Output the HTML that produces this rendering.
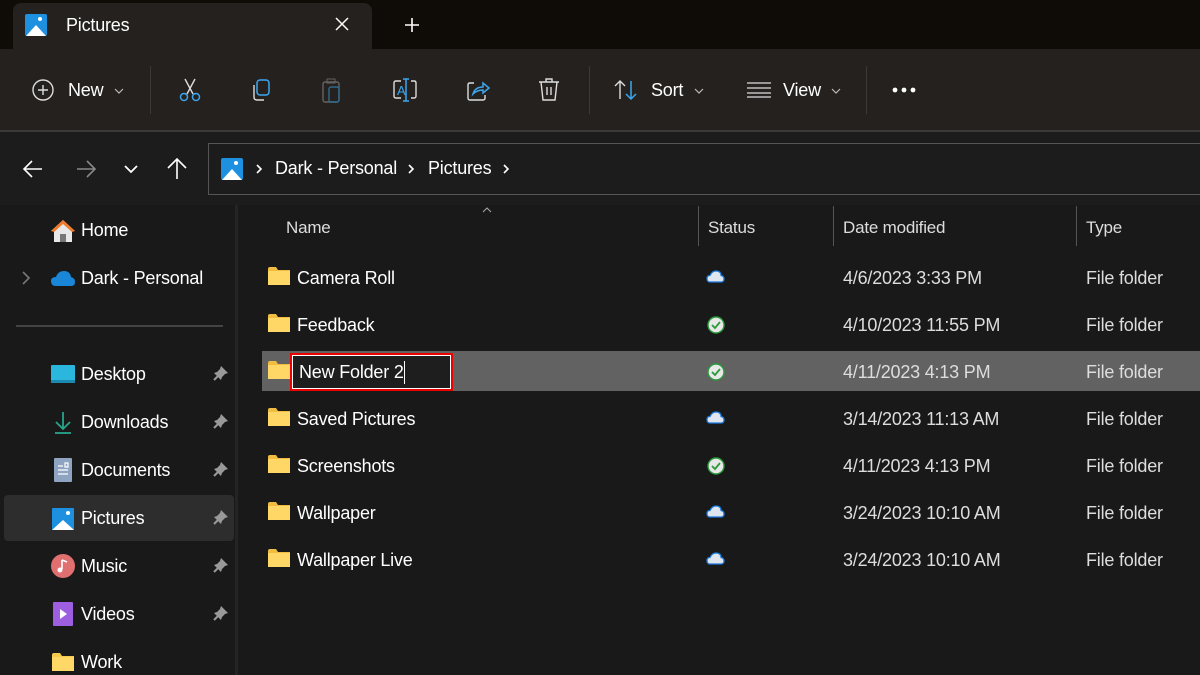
<!DOCTYPE html>
<html><head><meta charset="utf-8"><style>
*{margin:0;padding:0;box-sizing:border-box}
body{width:1200px;height:675px;overflow:hidden;background:#1c1c1c;font-family:"Segoe UI","Liberation Sans",sans-serif;color:#fff;position:relative}
.a{position:absolute}
.t{font-size:18px;white-space:nowrap;letter-spacing:-0.2px}
svg{position:absolute;overflow:visible}
</style></head><body>
<div class="a" style="left:0;top:0;width:1200px;height:49px;background:#0f0b06"></div>
<div class="a" style="left:13px;top:3px;width:359px;height:48px;background:#24211e;border-radius:8px 8px 0 0"></div>
<svg style="left:25px;top:14px" width="22" height="22"><rect width="22" height="22" rx="2" fill="#1e90e0"/><path d="M1 22 L11 11 L21 22Z" fill="#fff"/><circle cx="15" cy="5" r="2" fill="#fff"/></svg>
<div class="a t" style="left:66px;top:15px;font-size:18px">Pictures</div>
<svg style="left:335px;top:17px" width="14" height="14"><path d="M1 1L13 13M13 1L1 13" stroke="#fff" stroke-width="1.5"/></svg>
<svg style="left:404px;top:17px" width="16" height="16"><path d="M8 1V15M1 8H15" stroke="#fff" stroke-width="1.6"/></svg>
<div class="a" style="left:0;top:49px;width:1200px;height:81px;background:#24211e"></div>
<div class="a" style="left:0;top:130px;width:1200px;height:2px;background:#3a3a3a"></div>
<svg style="left:32px;top:79px" width="22" height="22"><circle cx="11" cy="11" r="10" fill="none" stroke="#ddd" stroke-width="1.4"/><path d="M11 6V16M6 11H16" stroke="#ddd" stroke-width="1.4"/></svg>
<div class="a t" style="left:68px;top:80px">New</div>
<svg style="left:114px;top:88px" width="10" height="6"><path d="M1 1L5 5L9 1" fill="none" stroke="#bbb" stroke-width="1.2"/></svg>
<div class="a" style="left:150px;top:66px;width:1px;height:48px;background:#3a3a3a"></div>
<svg style="left:178px;top:78px" width="24" height="24"><path d="M7 1L15 16M17 1L9 16" stroke="#ddd" stroke-width="1.4"/><circle cx="6" cy="19" r="3.5" fill="none" stroke="#3ba7f0" stroke-width="1.5"/><circle cx="18" cy="19" r="3.5" fill="none" stroke="#3ba7f0" stroke-width="1.5"/></svg>
<svg style="left:250px;top:79px" width="24" height="24"><rect x="7" y="1" width="12" height="15" rx="3" fill="none" stroke="#3ba7f0" stroke-width="1.5"/><path d="M4 6V18Q4 21 7 21H14" fill="none" stroke="#ddd" stroke-width="1.4"/></svg>
<svg style="left:322px;top:78px" width="24" height="26" opacity=".55"><rect x="1" y="4" width="16" height="20" rx="2" fill="none" stroke="#999" stroke-width="1.4"/><rect x="7" y="9" width="10" height="15" rx="2" fill="none" stroke="#3ba7f0" stroke-width="1.4"/><rect x="5" y="1" width="8" height="4" fill="none" stroke="#999"/></svg>
<svg style="left:393px;top:78px" width="26" height="26"><path d="M8 3H3Q1 3 1 5V18Q1 20 3 20H8M18 3H21Q23 3 23 5V18Q23 20 21 20H18" fill="none" stroke="#ddd" stroke-width="1.4"/><path d="M13 1V23M10 1H16M10 23H16" stroke="#3ba7f0" stroke-width="1.5"/><text x="4" y="17" font-size="13" fill="#3ba7f0" font-family="Liberation Sans">A</text></svg>
<svg style="left:466px;top:79px" width="26" height="24"><path d="M8 4H4Q2 4 2 6V19Q2 21 4 21H17Q19 21 19 19V16" fill="none" stroke="#ddd" stroke-width="1.4"/><path d="M7 15Q9 8 17 8V4L23 9L17 14V11Q11 11 7 15Z" fill="none" stroke="#3ba7f0" stroke-width="1.5"/></svg>
<svg style="left:538px;top:78px" width="22" height="24"><path d="M1 4H21M8 4V1H14V4M3 4L5 22H17L19 4M9 9V17M13 9V17" fill="none" stroke="#ddd" stroke-width="1.4"/></svg>
<div class="a" style="left:589px;top:66px;width:1px;height:48px;background:#3a3a3a"></div>
<svg style="left:614px;top:80px" width="24" height="20"><path d="M6 19V1M1 6L6 1L11 6" fill="none" stroke="#ddd" stroke-width="1.4"/><path d="M17 1V19M12 14L17 19L22 14" fill="none" stroke="#3ba7f0" stroke-width="1.5"/></svg>
<div class="a t" style="left:651px;top:80px">Sort</div>
<svg style="left:694px;top:88px" width="10" height="6"><path d="M1 1L5 5L9 1" fill="none" stroke="#bbb" stroke-width="1.2"/></svg>
<svg style="left:747px;top:82px" width="24" height="16"><path d="M0 1H24M0 6H24M0 11H24M0 15H24" stroke="#ddd" stroke-width="1.3"/></svg>
<div class="a t" style="left:783px;top:80px">View</div>
<svg style="left:831px;top:88px" width="10" height="6"><path d="M1 1L5 5L9 1" fill="none" stroke="#bbb" stroke-width="1.2"/></svg>
<div class="a" style="left:866px;top:66px;width:1px;height:48px;background:#3a3a3a"></div>
<svg style="left:892px;top:87px" width="26" height="6"><circle cx="3" cy="3" r="2.4" fill="#fff"/><circle cx="12" cy="3" r="2.4" fill="#fff"/><circle cx="21" cy="3" r="2.4" fill="#fff"/></svg>
<svg style="left:23px;top:160px" width="20" height="18"><path d="M19 9H2M9 1L1 9L9 17" fill="none" stroke="#fff" stroke-width="1.6"/></svg>
<svg style="left:76px;top:160px" width="20" height="18"><path d="M1 9H18M11 1L19 9L11 17" fill="none" stroke="#888" stroke-width="1.6"/></svg>
<svg style="left:124px;top:165px" width="14" height="8"><path d="M1 1L7 7L13 1" fill="none" stroke="#fff" stroke-width="1.8"/></svg>
<svg style="left:167px;top:158px" width="20" height="22"><path d="M10 21V2M1 10L10 1L19 10" fill="none" stroke="#fff" stroke-width="1.6"/></svg>
<div class="a" style="left:208px;top:143px;width:1000px;height:52px;border:1px solid #555;background:#1c1c1c"></div>
<svg style="left:221px;top:158px" width="22" height="22"><rect width="22" height="22" rx="2" fill="#1e90e0"/><path d="M1 22 L11 11 L21 22Z" fill="#fff"/><circle cx="15" cy="5" r="2" fill="#fff"/></svg>
<svg style="left:256px;top:164px" width="6" height="10"><path d="M1 1L5 5L1 9" fill="none" stroke="#fff" stroke-width="1.6"/></svg>
<div class="a t" style="left:275px;top:158px">Dark - Personal</div>
<svg style="left:408px;top:164px" width="6" height="10"><path d="M1 1L5 5L1 9" fill="none" stroke="#fff" stroke-width="1.6"/></svg>
<div class="a t" style="left:428px;top:158px">Pictures</div>
<svg style="left:503px;top:164px" width="6" height="10"><path d="M1 1L5 5L1 9" fill="none" stroke="#fff" stroke-width="1.6"/></svg>
<div class="a" style="left:0;top:205px;width:238px;height:470px;background:#191919"></div>
<div class="a" style="left:235px;top:205px;width:3px;height:470px;background:#242424"></div>
<div class="a" style="left:238px;top:205px;width:962px;height:470px;background:#191919"></div>
<svg style="left:50px;top:219px" width="26" height="24"><path d="M13 1L1 12H4V23H22V12H25Z" fill="#e8e8e8"/><path d="M13 1L1 12L4 13L13 5L22 13L25 12Z" fill="#f07a28"/><rect x="10" y="15" width="6" height="8" fill="#777"/></svg>
<div class="a t" style="left:81px;top:220px">Home</div>
<svg style="left:22px;top:271px" width="8" height="14"><path d="M1 1L7 7L1 13" fill="none" stroke="#777" stroke-width="1.6"/></svg>
<svg style="left:50px;top:268px" width="26" height="20"><path d="M6 18Q1 18 1 13Q1 9 6 9Q8 3 14 3Q20 3 21 9Q25 10 25 14Q25 18 21 18Z" fill="#1a86d8"/></svg>
<div class="a t" style="left:81px;top:268px">Dark - Personal</div>
<div class="a" style="left:16px;top:325px;width:207px;height:2px;background:#444"></div>
<div class="a" style="left:4px;top:495px;width:230px;height:46px;background:#2d2d2d;border-radius:4px"></div>
<svg style="left:51px;top:365px" width="24" height="18"><rect width="24" height="18" rx="1" fill="#2bb6dd"/><rect y="15" width="24" height="3" fill="#1a8ab0"/></svg>
<div class="a t" style="left:81px;top:364px">Desktop</div>
<svg style="left:53px;top:411px" width="20" height="24"><path d="M10 1V18M3 11L10 18L17 11" fill="none" stroke="#27a48a" stroke-width="1.8"/><path d="M2 22H18" stroke="#27a48a" stroke-width="1.8"/></svg>
<div class="a t" style="left:81px;top:412px">Downloads</div>
<svg style="left:54px;top:458px" width="18" height="24"><rect width="18" height="24" rx="1" fill="#8fa4c0"/><path d="M4 8H9M4 12H14M4 16H14M11 5H14V9H11Z" stroke="#fff" stroke-width="1.2" fill="none"/></svg>
<div class="a t" style="left:81px;top:460px">Documents</div>
<svg style="left:52px;top:508px" width="22" height="22"><rect width="22" height="22" rx="1" fill="#1e90e0"/><path d="M0 22 L11 12 L22 22Z" fill="#fff"/><circle cx="16" cy="5" r="2" fill="#fff"/></svg>
<div class="a t" style="left:81px;top:508px">Pictures</div>
<svg style="left:51px;top:554px" width="24" height="24"><circle cx="12" cy="12" r="12" fill="#e07070"/><path d="M11 6V15M11 6L16 8" stroke="#fff" stroke-width="1.6" fill="none"/><circle cx="9" cy="16" r="2.5" fill="#fff"/></svg>
<div class="a t" style="left:81px;top:556px">Music</div>
<svg style="left:53px;top:602px" width="20" height="24"><rect width="20" height="24" rx="1" fill="#9d5ee0"/><path d="M7 7L14 12L7 17Z" fill="#fff"/></svg>
<div class="a t" style="left:81px;top:604px">Videos</div>
<svg style="left:52px;top:653px" width="22" height="18"><path d="M0 2Q0 0 2 0H8L10 3H22V18H0Z" fill="#f6c84b"/><rect y="4" width="22" height="14" fill="#ffd766"/></svg>
<div class="a t" style="left:81px;top:652px">Work</div>
<div id="pins"></div>
<svg style="left:482px;top:207px" width="10" height="6"><path d="M1 5L5 1L9 5" fill="none" stroke="#aaa" stroke-width="1"/></svg>
<div class="a t" style="left:286px;top:218px;color:#ddd;font-size:17px">Name</div>
<div class="a" style="left:698px;top:206px;width:1px;height:40px;background:#555"></div>
<div class="a t" style="left:708px;top:218px;color:#ddd;font-size:17px">Status</div>
<div class="a" style="left:833px;top:206px;width:1px;height:40px;background:#555"></div>
<div class="a t" style="left:843px;top:218px;color:#ddd;font-size:17px">Date modified</div>
<div class="a" style="left:1076px;top:206px;width:1px;height:40px;background:#555"></div>
<div class="a t" style="left:1086px;top:218px;color:#ddd;font-size:17px">Type</div>
<div class="a" style="left:262px;top:351px;width:938px;height:40px;background:#626262"></div>
<div class="a" style="left:290px;top:353px;width:163px;height:38px;border:2px solid #e00;background:#1e1e1e;box-shadow:inset 0 0 0 1px #fff"></div>
<div id="rows"></div>
<div class="a" style="left:404px;top:361px;width:1px;height:23px;background:#fff"></div>
<script>
var r=[["Camera Roll","4/6/2023 3:33 PM",0],["Feedback","4/10/2023 11:55 PM",1],["New Folder 2","4/11/2023 4:13 PM",1],["Saved Pictures","3/14/2023 11:13 AM",0],["Screenshots","4/11/2023 4:13 PM",1],["Wallpaper","3/24/2023 10:10 AM",0],["Wallpaper Live","3/24/2023 10:10 AM",0]];
var h="";r.forEach(function(x,i){var y=278+i*47;
h+='<svg style="left:268px;top:'+(y-11)+'px" width="22" height="18"><path d="M0 2Q0 0 2 0H8L10 3H22V18H0Z" fill="#f0bd40"/><rect y="4" width="22" height="14" fill="#ffd766"/></svg>';
h+='<div class="a t" style="left:'+(i==2?299:297)+'px;top:'+(y-10)+'px">'+x[0]+'</div>';
if(x[2])h+='<svg style="left:707px;top:'+(y-9)+'px" width="18" height="18"><circle cx="9" cy="9" r="8" fill="#e8e8e8" stroke="#2a9a3a" stroke-width="1.4"/><path d="M5 9L8 12L13 6" fill="none" stroke="#2a9a3a" stroke-width="1.8"/></svg>';
else h+='<svg style="left:706px;top:'+(y-8)+'px" width="19" height="13"><path d="M4 12Q1 12 1 8.5Q1 5.5 4 5.5Q6 1 10 1Q15 1 15 5.5Q18 6 18 9Q18 12 15 12Z" fill="#e0e6ee" stroke="#1a7ae0" stroke-width="1.3"/></svg>';
h+='<div class="a t" style="left:843px;top:'+(y-10)+'px;color:#ddd">'+x[1]+'</div>';
h+='<div class="a t" style="left:1086px;top:'+(y-10)+'px;color:#ddd">File folder</div>';});
document.getElementById("rows").outerHTML=h;
var p="";for(var k=0;k<6;k++){var y=365+k*48;p+='<svg style="left:213px;top:'+y+'px" width="16" height="16"><path d="M8 1L15 8L12 9L9 12L8 15L1 8L4 7L7 4Z" fill="#999"/><path d="M5 11L1 15" stroke="#999" stroke-width="2"/></svg>';}
document.getElementById("pins").outerHTML=p;
</script>
</body></html>
